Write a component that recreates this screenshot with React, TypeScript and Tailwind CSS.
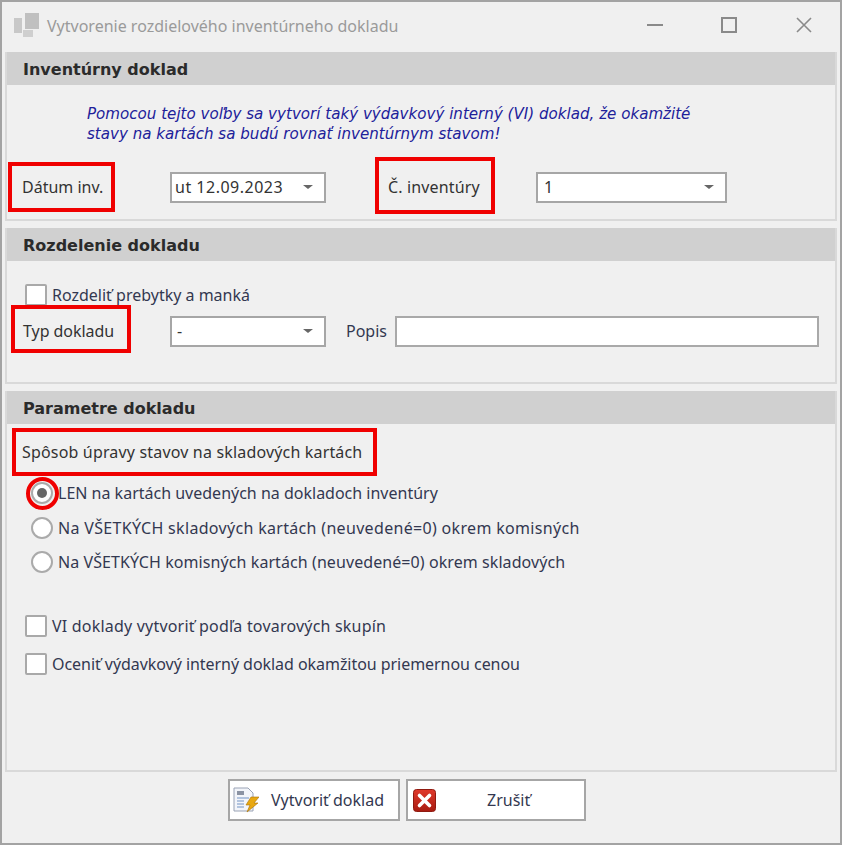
import React from "react";

const font = { fontFamily: '"Noto Sans", "Open Sans", sans-serif' };

function Combo({ value, className }: { value: string; className: string }) {
  return (
    <div className={`h-[31px] flex items-center justify-between bg-white border-2 border-[#a6a6a6] pl-[3px] pr-[11px] text-[16px] text-[#333] ${className}`}>
      <span>{value}</span>
      <span className="w-0 h-0 border-l-[5px] border-r-[5px] border-t-[4px] border-l-transparent border-r-transparent border-t-[#666]" />
    </div>
  );
}

function Check({ label, className = "" }: { label: string; className?: string }) {
  return (
    <div className="flex items-center gap-[5px] h-[22px] text-[16px] text-[#333850]">
      <span className="w-[22px] h-[22px] bg-white border-2 border-[#a9a9a9] rounded-[2px]" />
      <span className={className}>{label}</span>
    </div>
  );
}

function Radio({ label, checked, className = "" }: { label: string; checked?: boolean; className?: string }) {
  return (
    <div className="relative flex items-center gap-[5px] h-[22px] text-[16px] text-[#333850]">
      <span className="w-[22px] h-[22px] rounded-full bg-white border-2 border-[#aaaaaa] flex items-center justify-center">
        {checked && <span className="w-[10px] h-[10px] rounded-full bg-[#666]" />}
      </span>
      <span className={className}>{label}</span>
      {checked && <span className="absolute left-[-5px] top-[-5px] w-[33px] h-[33px] rounded-full border-4 border-[#f00000]" />}
    </div>
  );
}

function Header({ title }: { title: string }) {
  return (
    <div className="h-[33px] bg-[#d0d0d0] flex items-center pl-[16px] pt-[2px] text-[16px] font-bold text-[#2b2b2b] shrink-0 font-['DejaVu_Sans']">
      {title}
    </div>
  );
}

function AppIcon() {
  return (
    <svg width="26" height="26" viewBox="0 0 26 26" className="shrink-0 mt-[-4px]">
      <rect x="0" y="6" width="8" height="15" fill="#c8c8c8" />
      <rect x="11" y="1" width="14" height="16" fill="#c0c0c0" />
      <rect x="9" y="18" width="10" height="7" fill="#cfcfcf" />
    </svg>
  );
}

function DocIcon() {
  return (
    <svg width="26" height="26" viewBox="0 0 26 26" className="shrink-0">
      <path d="M1 1h14l5 5v18H1z" fill="#f3f5fa" stroke="#9aa3b5" strokeWidth="1" />
      <rect x="4" y="4" width="7" height="4" fill="#8b93a3" />
      <path d="M4 11h12M4 14h7M4 17h7M4 20h7" stroke="#9db4d6" strokeWidth="1.5" />
      <path d="M18 10h8l-5 6h4l-11 9 3-7h-4z" fill="#e8a811" stroke="#a8700a" strokeWidth="0.6" />
    </svg>
  );
}

function CancelIcon() {
  return (
    <svg width="23" height="23" viewBox="0 0 23 23" className="shrink-0">
      <defs>
        <linearGradient id="cancel" x1="0" y1="0" x2="0" y2="1">
          <stop offset="0" stopColor="#e0392b" />
          <stop offset="1" stopColor="#a81b10" />
        </linearGradient>
      </defs>
      <rect x="0.5" y="0.5" width="22" height="22" rx="3" fill="url(#cancel)" stroke="#8f1a10" />
      <path d="M6.5 6.5l10 10M16.5 6.5l-10 10" stroke="#fff" strokeWidth="3.6" strokeLinecap="round" />
    </svg>
  );
}

export default function App() {
  return (
    <div style={font} className="w-[842px] h-[845px] bg-[#f0f0f0] border-2 border-[#a3a3a3] flex flex-col overflow-hidden">
      <div className="h-[50px] flex items-center pl-[12px] shrink-0">
        <AppIcon />
        <span className="ml-[7px] mb-[2px] text-[16px] text-[#9a9a9a]">Vytvorenie rozdielového inventúrneho dokladu</span>
        <div className="ml-auto flex items-center pr-[28px] mb-[4px]">
          <span className="w-[16px] h-[2px] bg-[#8a8a8a]" />
          <span className="ml-[58px] w-[16px] h-[16px] border-2 border-[#8a8a8a]" />
          <svg width="16" height="16" viewBox="0 0 16 16" className="ml-[59px]">
            <path d="M1 1l14 14M15 1L1 15" stroke="#8a8a8a" strokeWidth="1.6" />
          </svg>
        </div>
      </div>

      <div className="mx-[3px] flex flex-col flex-1 min-h-0">
        <section className="h-[169px] border-2 border-t-0 border-[#d9d9d9] flex flex-col shrink-0">
          <Header title="Inventúrny doklad" />
          <div className="pl-[80px] pt-[19px] text-[15.1px] leading-[20px] italic text-[#20209a] font-['DejaVu_Sans']">
            <div>Pomocou tejto voľby sa vytvorí taký výdavkový interný (VI) doklad, že okamžité</div>
            <div>stavy na kartách sa budú rovnať inventúrnym stavom!</div>
          </div>
          <div className="flex items-center h-[58px] mt-[12px] text-[16px] text-[#333]">
            <div className="ml-[1px] w-[107px] h-[50px] border-4 border-[#f00000] flex items-center pl-[10px] mt-[4px]">Dátum inv.</div>
            <Combo value="ut 12.09.2023" className="ml-[55px] w-[156px] mt-[4px] tracking-[0.5px]" />
            <div className="ml-[49px] w-[120px] h-[57px] border-4 border-[#f00000] flex items-center pl-[9px] pt-[3px] tracking-[0.15px]">Č. inventúry</div>
            <Combo value="1" className="ml-[41px] w-[191px] pl-[6px] mt-[4px]" />
          </div>
        </section>

        <section className="mt-[7px] h-[156px] border-2 border-t-0 border-[#d9d9d9] flex flex-col shrink-0">
          <Header title="Rozdelenie dokladu" />
          <div className="pl-[18px] pt-[23px]"><Check label="Rozdeliť prebytky a manká" /></div>
          <div className="flex items-center mt-[3px] text-[16px] text-[#333]">
            <div className="ml-[4px] w-[120px] h-[48px] mt-[-4px] border-4 border-[#f00000] flex items-center pl-[8px] pt-[4px] tracking-[-0.05px]">Typ dokladu</div>
            <Combo value="-" className="ml-[39px] w-[156px] pl-[5px]" />
            <span className="ml-[20px] text-[#333850]">Popis</span>
            <div className="ml-[8px] w-[424px] h-[31px] bg-white border-2 border-[#a9a9a9]" />
          </div>
        </section>

        <section className="mt-[7px] flex-1 border-2 border-t-0 border-[#d9d9d9] flex flex-col min-h-0">
          <Header title="Parametre dokladu" />
          <div className="ml-[5px] mt-[4px] w-[365px] h-[48px] border-4 border-[#f00000] flex items-center pl-[6px] text-[16px] text-[#333] shrink-0 tracking-[0.17px]">
            Spôsob úpravy stavov na skladových kartách
          </div>
          <div className="ml-[24px] mt-[6px] flex flex-col gap-[12.5px]">
            <Radio checked label="LEN na kartách uvedených na dokladoch inventúry" />
            <Radio label="Na VŠETKÝCH skladových kartách (neuvedené=0) okrem komisných" className="tracking-[0.32px]" />
            <Radio label="Na VŠETKÝCH komisných kartách (neuvedené=0) okrem skladových" className="tracking-[0.08px]" />
          </div>
          <div className="ml-[18px] mt-[42px] flex flex-col gap-[16px]">
            <Check label="VI doklady vytvoriť podľa tovarových skupín" className="tracking-[0.2px]" />
            <Check label="Oceniť výdavkový interný doklad okamžitou priemernou cenou" className="tracking-[-0.05px]" />
          </div>
        </section>

        <footer className="h-[71px] shrink-0 pt-[7px] pl-[223px] flex items-start gap-[6px] text-[16px] text-[#333850]">
          <button className="w-[172px] h-[42px] bg-white border-2 border-[#a6a6a6] flex items-center pl-[3px]">
            <DocIcon />
            <span className="ml-[12px]">Vytvoriť doklad</span>
          </button>
          <button className="w-[180px] h-[42px] bg-white border-2 border-[#a6a6a6] flex items-center pl-[5px]">
            <CancelIcon />
            <span className="ml-[51px]">Zrušiť</span>
          </button>
        </footer>
      </div>
    </div>
  );
}
